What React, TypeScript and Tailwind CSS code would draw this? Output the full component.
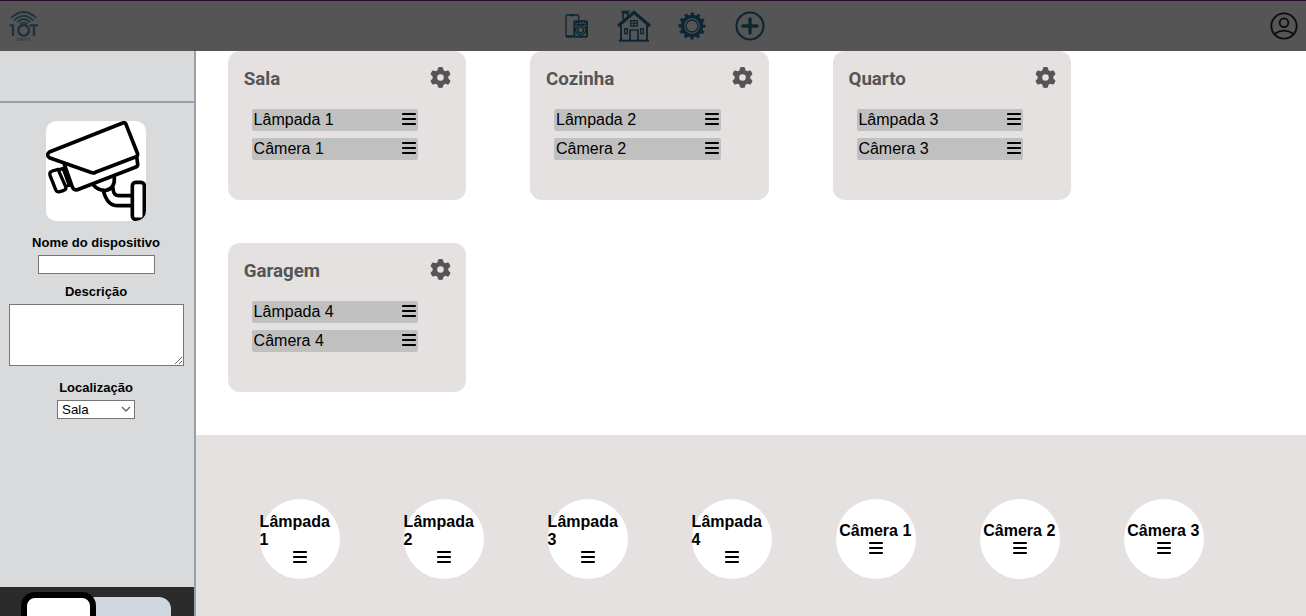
import { FaBars, FaGear } from 'react-icons/fa6';

const rooms = [
  { name: 'Sala', n: 1 },
  { name: 'Cozinha', n: 2 },
  { name: 'Quarto', n: 3 },
  { name: 'Garagem', n: 4 },
];

const devices = ['Lâmpada 1', 'Lâmpada 2', 'Lâmpada 3', 'Lâmpada 4', 'Câmera 1', 'Câmera 2', 'Câmera 3'];

function Logo() {
  return (
    <svg className="h-[32px] w-[32px]" viewBox="0 0 96 96" fill="none" stroke="#1d323a" strokeWidth="5">
      <path d="M9 24 Q47 -12 85 24M18 31 Q47 4 76 31M27 37 Q47 18 67 37M36 42 Q47 33 58 42" />
      <path d="M5 46h10v32" strokeWidth="7" />
      <circle cx="47" cy="61" r="16" strokeWidth="7" />
      <path d="M65 46h26M78 46v32" strokeWidth="7" />
      <text x="47" y="94" fontSize="11" textLength="40" fontWeight="700" textAnchor="middle" fill="#1d323a" stroke="none" className="font-['Liberation_Sans',sans-serif]">UNITY</text>
    </svg>
  );
}

function PhoneIcon() {
  return (
    <svg className="h-[24px] w-[24px]" viewBox="46 40 72 72" fill="none" stroke="#0b2733" strokeWidth="4">
      <path d="M72 109H53q-4 0-4-4V47q0-4 4-4H83q4 0 4 4v11" />
      <path d="M49 106h21M60 44h14" strokeWidth="5" />
      <rect x="74" y="62" width="38" height="46" rx="2" strokeWidth="6" />
      <path d="M73 71h40" strokeWidth="5" />
      <path d="M78 65h12M95 65h3M103 65h4" />
      <circle cx="93" cy="88" r="15" />
      <circle cx="93" cy="88" r="8.5" strokeWidth="4" />
    </svg>
  );
}

function HouseIcon() {
  return (
    <svg className="h-[34px] w-[34px]" viewBox="201 26 102 102" fill="none" stroke="#0b2733" strokeWidth="5">
      <path d="M204 77 252 36 300 77" strokeWidth="10" />
      <path d="M219 57V38h14v8" strokeWidth="5" />
      <path d="M214 34h24" strokeWidth="6" />
      <path d="M213 73v47M291 73v47" strokeWidth="6" />
      <path d="M207 121h90" strokeWidth="6" />
      <rect x="242" y="61" width="20" height="16" strokeWidth="4" />
      <path d="M252 61v16M242 69h20" strokeWidth="3" />
      <path d="M240 119V89h24v30" />
      <rect x="224" y="85" width="8" height="15" strokeWidth="4" />
      <rect x="272" y="85" width="8" height="15" strokeWidth="4" />
    </svg>
  );
}

function CogIcon() {
  return (
    <svg className="h-[28px] w-[28px]" viewBox="384 34 84 84" fill="none" stroke="#0b2733">
      <circle cx="426" cy="76" r="36" strokeWidth="9" strokeDasharray="9.5 9.35" strokeDashoffset="4.75" />
      <circle cx="426" cy="76" r="28.5" strokeWidth="11" />
      <circle cx="426" cy="76" r="18" strokeWidth="4" />
    </svg>
  );
}

function PlusIcon() {
  return (
    <svg className="h-[30px] w-[30px]" viewBox="554 32 90 90" fill="none" stroke="#0b2733">
      <circle cx="599" cy="77" r="40.5" strokeWidth="6.5" />
      <path d="M599 56v42M578 77h42" strokeWidth="10" strokeLinecap="round" />
    </svg>
  );
}

function UserIcon() {
  return (
    <svg className="h-[28px] w-[28px]" viewBox="91 35 84 84" fill="none" stroke="#0c0c0c" strokeWidth="5.5">
      <circle cx="133" cy="77" r="38" />
      <circle cx="133" cy="67" r="13" />
      <path d="M104 101q29-20 58 0" />
    </svg>
  );
}

function CameraIcon() {
  return (
    <svg className="size-[100px] rounded-[10px] bg-white" viewBox="48 33 300 300" fill="none" stroke="#000" strokeWidth="11" strokeLinejoin="round" strokeLinecap="round">
      <path d="M58 126 278 39q7-3 10 4l34 86q3 8-4 11L196 187q-5 3-10 1L58 143q-10-8 0-17Z" />
      <path d="m103 163 24 68q4 11 15 8l174-67q8-3 7-11l-3-21" />
      <path d="m84 178-17 5q-10 3-7 13l17 43q4 9 13 6l12-4q8-4 5-11L88 187q-2-6 2-9l11-3M109 228l11-3M101 180l17 46" strokeWidth="10" />
      <path d="M191 226q15 17 37 15 27-5 25-38M220 243c8 27 19 44 44 44h40M249 234q1 23 16 23h39" />
      <rect x="307" y="217" width="36" height="111" rx="10" />
    </svg>
  );
}

function RoomCard({ name, n }: { name: string; n: number }) {
  return (
    <section className="h-[149px] w-[238.4px] rounded-[12px] bg-[#e5e1e0] px-4 pt-4">
      <div className="flex h-6 items-center justify-between text-[#555]">
        <h3 className="-ml-[0.3px] font-[Roboto,sans-serif] text-[18.72px] leading-6 font-bold">{name}</h3>
        <FaGear className="-mr-[0.4px] mb-1 size-[21px]" />
      </div>
      <ul className="mt-[18px] ml-2 flex w-[166.4px] flex-col gap-[7px]">
        {['Lâmpada', 'Câmera'].map((kind) => (
          <li key={kind} className="flex h-[22px] items-center justify-between rounded-[2px] bg-[#c0c0c0] px-[2px] leading-[18px]">
            <span className="-ml-[0.4px]">{kind} {n}</span>
            <FaBars className="mb-[2px] h-4 w-[14px]" />
          </li>
        ))}
      </ul>
    </section>
  );
}

export default function App() {
  return (
    <div className="flex h-[616px] w-[1306px] flex-col overflow-hidden bg-white font-['Liberation_Sans',Arial,sans-serif] text-base text-black">
      <header className="flex h-[51px] shrink-0 items-center border-t border-[#260b26] bg-[#555] pl-2">
        <Logo />
        <nav className="ml-[525px] flex items-center">
          <PhoneIcon />
          <span className="ml-7"><HouseIcon /></span>
          <span className="ml-[27px]"><CogIcon /></span>
          <span className="ml-[29px]"><PlusIcon /></span>
        </nav>
        <span className="ml-[505px]"><UserIcon /></span>
      </header>
      <div className="flex min-h-0 flex-1">
        <aside className="flex w-[196px] shrink-0 flex-col border-r-2 border-[#98a0a8] bg-[#d9dadc]">
          <div className="h-[52px] shrink-0 border-b-2 border-[#98a0a8]" />
          <form className="flex h-[484px] shrink-0 flex-col items-center pt-[18px] pr-[2px] text-[13.33px] leading-[15px]">
            <CameraIcon />
            <label className="mt-[14px] text-[13px] font-bold">Nome do dispositivo</label>
            <input className="mt-[5px] h-[19px] w-[117px] border border-[#767676] bg-white" />
            <label className="mt-[10px] text-[13px] font-bold">Descrição</label>
            <textarea className="mt-[5px] h-[62px] w-[175px] shrink-0 border border-[#767676] bg-white" />
            <label className="mt-[14px] text-[13px] font-bold">Localização</label>
            <div className="mt-[5px] grid h-[19px] w-[78px] items-center">
              <select className="col-start-1 row-start-1 h-[19px] w-[78px] appearance-none border border-[#767676] bg-white pl-1">
                <option>Sala</option>
              </select>
              <svg className="pointer-events-none z-10 col-start-1 row-start-1 mr-1 mb-px h-[6px] w-[10px] justify-self-end" viewBox="0 0 10 6" fill="none" stroke="#666" strokeWidth="1.4">
                <path d="m1 1 4 4 4-4" />
              </svg>
            </div>
          </form>
          <div className="flex h-[29px] shrink-0 items-start overflow-hidden bg-[#2b2b2b] pl-[21px]">
            <div className="z-10 mt-[5px] h-14 w-[75px] rounded-[14px] border-6 border-black bg-white" />
            <div className="mt-[10px] -ml-3 h-14 w-[87px] rounded-[12px] bg-[#d0d7df]" />
          </div>
        </aside>
        <main className="flex min-w-0 flex-1 flex-col">
          <div className="grid h-[384px] shrink-0 grid-cols-[repeat(3,238.4px)] content-start gap-x-16 gap-y-[43px] pl-8">
            {rooms.map((room) => <RoomCard key={room.name} {...room} />)}
          </div>
          <div className="flex flex-1 gap-16 bg-[#e5e1e0] pt-16 pl-16">
            {devices.map((device) => (
              <div key={device} className="flex size-20 shrink-0 flex-col items-center justify-center rounded-full bg-white pt-px pr-px leading-[18px] font-bold">
                <span className="-ml-[0.4px]">{device}</span>
                <span className="flex h-[17px] items-start"><FaBars className="h-4 w-[14px]" /></span>
              </div>
            ))}
          </div>
        </main>
      </div>
    </div>
  );
}
